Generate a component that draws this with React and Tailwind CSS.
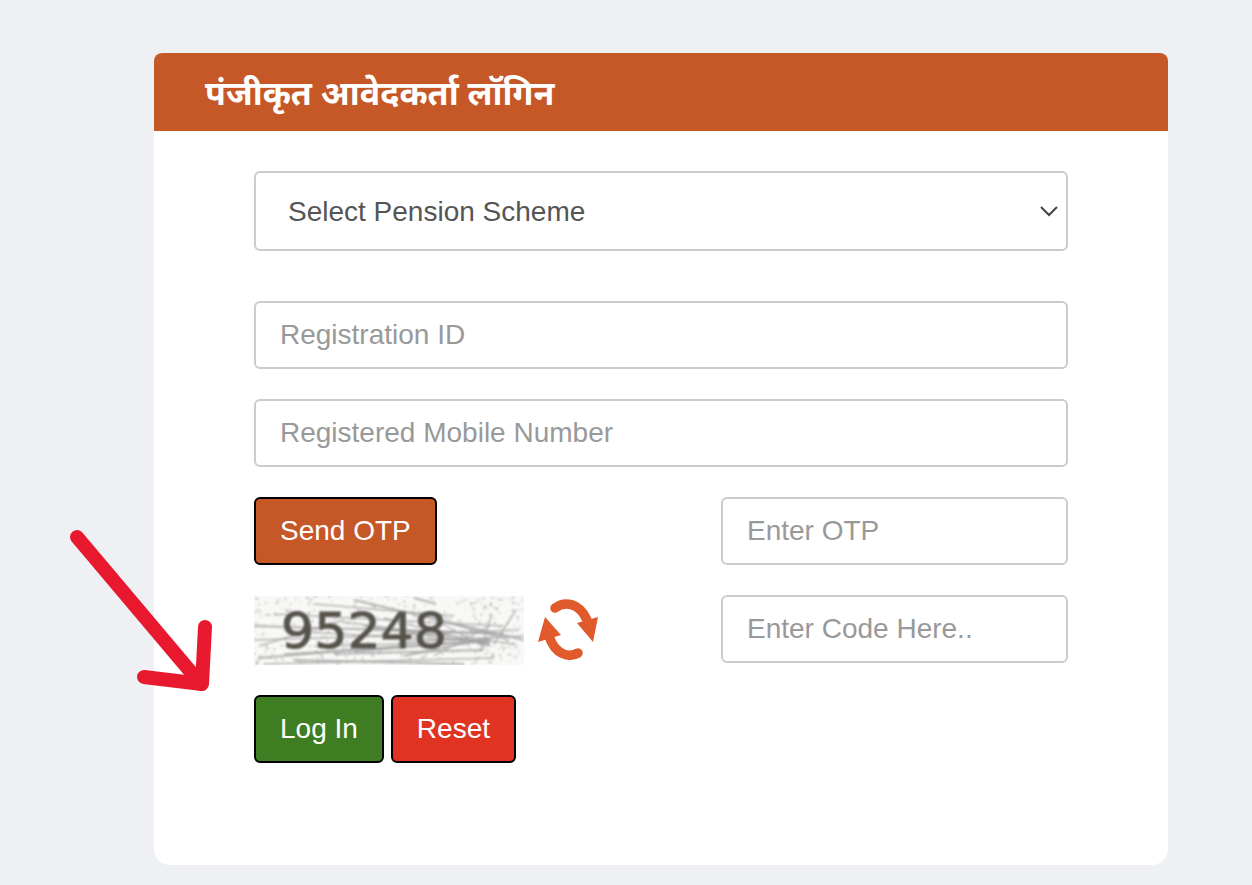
import React from 'react';

const FONT = 'font-["Liberation_Sans",Arial,sans-serif]';

const inputClass = 'h-[68px] rounded-md border-2 border-[#ccc] bg-white px-6 text-[28px] text-[#555] placeholder:text-[#999] outline-none';
const buttonClass = 'h-[68px] rounded-md border-2 border-black px-6 text-[28px] text-white';

// fixed scratch lines for the captcha noise
const SCRATCHES = [
  [4, 62, 150, 50], [10, 68, 240, 62], [30, 58, 220, 46], [0, 30, 200, 36], [20, 18, 250, 30],
  [60, 8, 200, 20], [100, 4, 270, 44], [120, 40, 265, 34], [90, 26, 260, 48], [140, 34, 250, 38],
  [5, 50, 90, 24], [180, 60, 235, 30], [40, 64, 210, 68], [170, 20, 255, 44], [0, 44, 130, 40],
  [80, 58, 230, 54], [150, 46, 270, 40], [238, 18, 226, 56], [160, 2, 182, 8], [50, 36, 236, 46],
  [60, 50, 236, 46], [110, 30, 236, 48], [100, 56, 236, 44], [130, 22, 236, 50], [150, 60, 236, 42],
  [185, 26, 232, 52], [262, 14, 240, 48],
];

let seed = 7;
const next = () => {
  seed = (seed * 16807) % 2147483647;
  return seed / 2147483647;
};
const SPECKS = Array.from({ length: 520 }, () => [next() * 270, next() * 69, 0.5 + next() * 0.9]);

const Captcha = () => (
  <svg width="270" height="69" viewBox="0 0 270 69" className="mt-px shrink-0">
    <defs>
      <filter id="soft" x="0" y="0" width="100%" height="100%">
        <feGaussianBlur stdDeviation="0.8" />
      </filter>
    </defs>
    <rect width="270" height="69" fill="#f8f8f6" />
    <g filter="url(#soft)">
      {SPECKS.map(([x, y, r], i) => (
        <circle key={i} cx={x} cy={y} r={r} fill="#b4b4b4" opacity="0.7" />
      ))}
      {SCRATCHES.map(([x1, y1, x2, y2], i) => (
        <line key={i} x1={x1} y1={y1} x2={x2} y2={y2} stroke="#a2a2a2" strokeWidth={i % 3 === 0 ? 2 : 1.4} opacity="0.8" />
      ))}
      <text x="27" y="52" fontFamily="'DejaVu Sans', sans-serif" fontSize="50" fill="#57534c" stroke="#57534c" strokeWidth="1" textLength="166" lengthAdjust="spacingAndGlyphs">95248</text>
    </g>
  </svg>
);

const RefreshIcon = () => (
  <svg width="60" height="62" viewBox="0 0 60 62" className="mt-[3px] shrink-0">
    <g fill="none" stroke="#e05a2b" strokeWidth="9.5" strokeLinecap="round">
      <path d="M17 10 C26 3 41 4 49 22" />
      <path d="M11 38 C17 57 31 60 40 55" />
    </g>
    <polygon points="39,25 60,19 55,44" fill="#e05a2b" />
    <polygon points="0,44 7,19 23,37" fill="#e05a2b" />
  </svg>
);

const App = () => {
  return (
    <div className={`relative min-h-[885px] bg-[#eef0f4] pl-[154px] pt-[53px] pb-5 ${FONT}`}>
      <div className="h-[812px] w-[1014px] overflow-hidden rounded-t-lg rounded-b-2xl bg-white">
        <div className="flex h-[78px] items-center bg-[#c65828] px-[51px] pt-[10px]">
          <h2 className='font-["Noto_Sans_Devanagari","Noto_Sans","Lohit_Devanagari",sans-serif] text-[34px] font-bold text-white'>पंजीकृत आवेदकर्ता लॉगिन</h2>
        </div>

        <form className="ml-[100px] mt-10 flex w-[814px] flex-col">
          <div className="relative">
            <select className="h-20 w-full appearance-none rounded-md border-2 border-[#ccc] bg-white pl-8 pt-[2px] text-[28px] text-[#555] outline-none">
              <option>Select Pension Scheme</option>
            </select>
            <svg width="20" height="12" viewBox="0 0 20 12" className="pointer-events-none absolute right-[9px] top-[34px]">
              <path d="M2 2 L10 10 L18 2" fill="none" stroke="#444" strokeWidth="2" />
            </svg>
          </div>

          <input className={`mt-[50px] w-full ${inputClass}`} placeholder="Registration ID" />
          <input className={`mt-[30px] w-full ${inputClass}`} placeholder="Registered Mobile Number" />

          <div className="mt-[30px] flex items-center justify-between">
            <button type="button" className={`bg-[#c65828] ${buttonClass}`}>Send OTP</button>
            <input className={`w-[347px] ${inputClass}`} placeholder="Enter OTP" />
          </div>

          <div className="mt-[30px] flex h-[68px] items-start justify-between">
            <div className="flex items-start gap-[14px]">
              <Captcha />
              <RefreshIcon />
            </div>
            <input className={`w-[347px] ${inputClass}`} placeholder="Enter Code Here.." />
          </div>

          <div className="mt-8 flex gap-[7px]">
            <button type="button" className={`bg-[#3f7d22] ${buttonClass}`}>Log In</button>
            <button type="button" className={`bg-[#e03322] ${buttonClass}`}>Reset</button>
          </div>
        </form>
      </div>

      {/* annotation arrow drawn over the page */}
      <svg width="160" height="180" viewBox="0 0 160 180" className="pointer-events-none absolute left-[60px] top-[520px]">
        <g fill="none" stroke="#e8192f" strokeWidth="14" strokeLinecap="round" strokeLinejoin="round">
          <path d="M17 17 L141 164" />
          <path d="M84 157 L142 164 L145 107" />
        </g>
      </svg>
    </div>
  );
};

export default App;
